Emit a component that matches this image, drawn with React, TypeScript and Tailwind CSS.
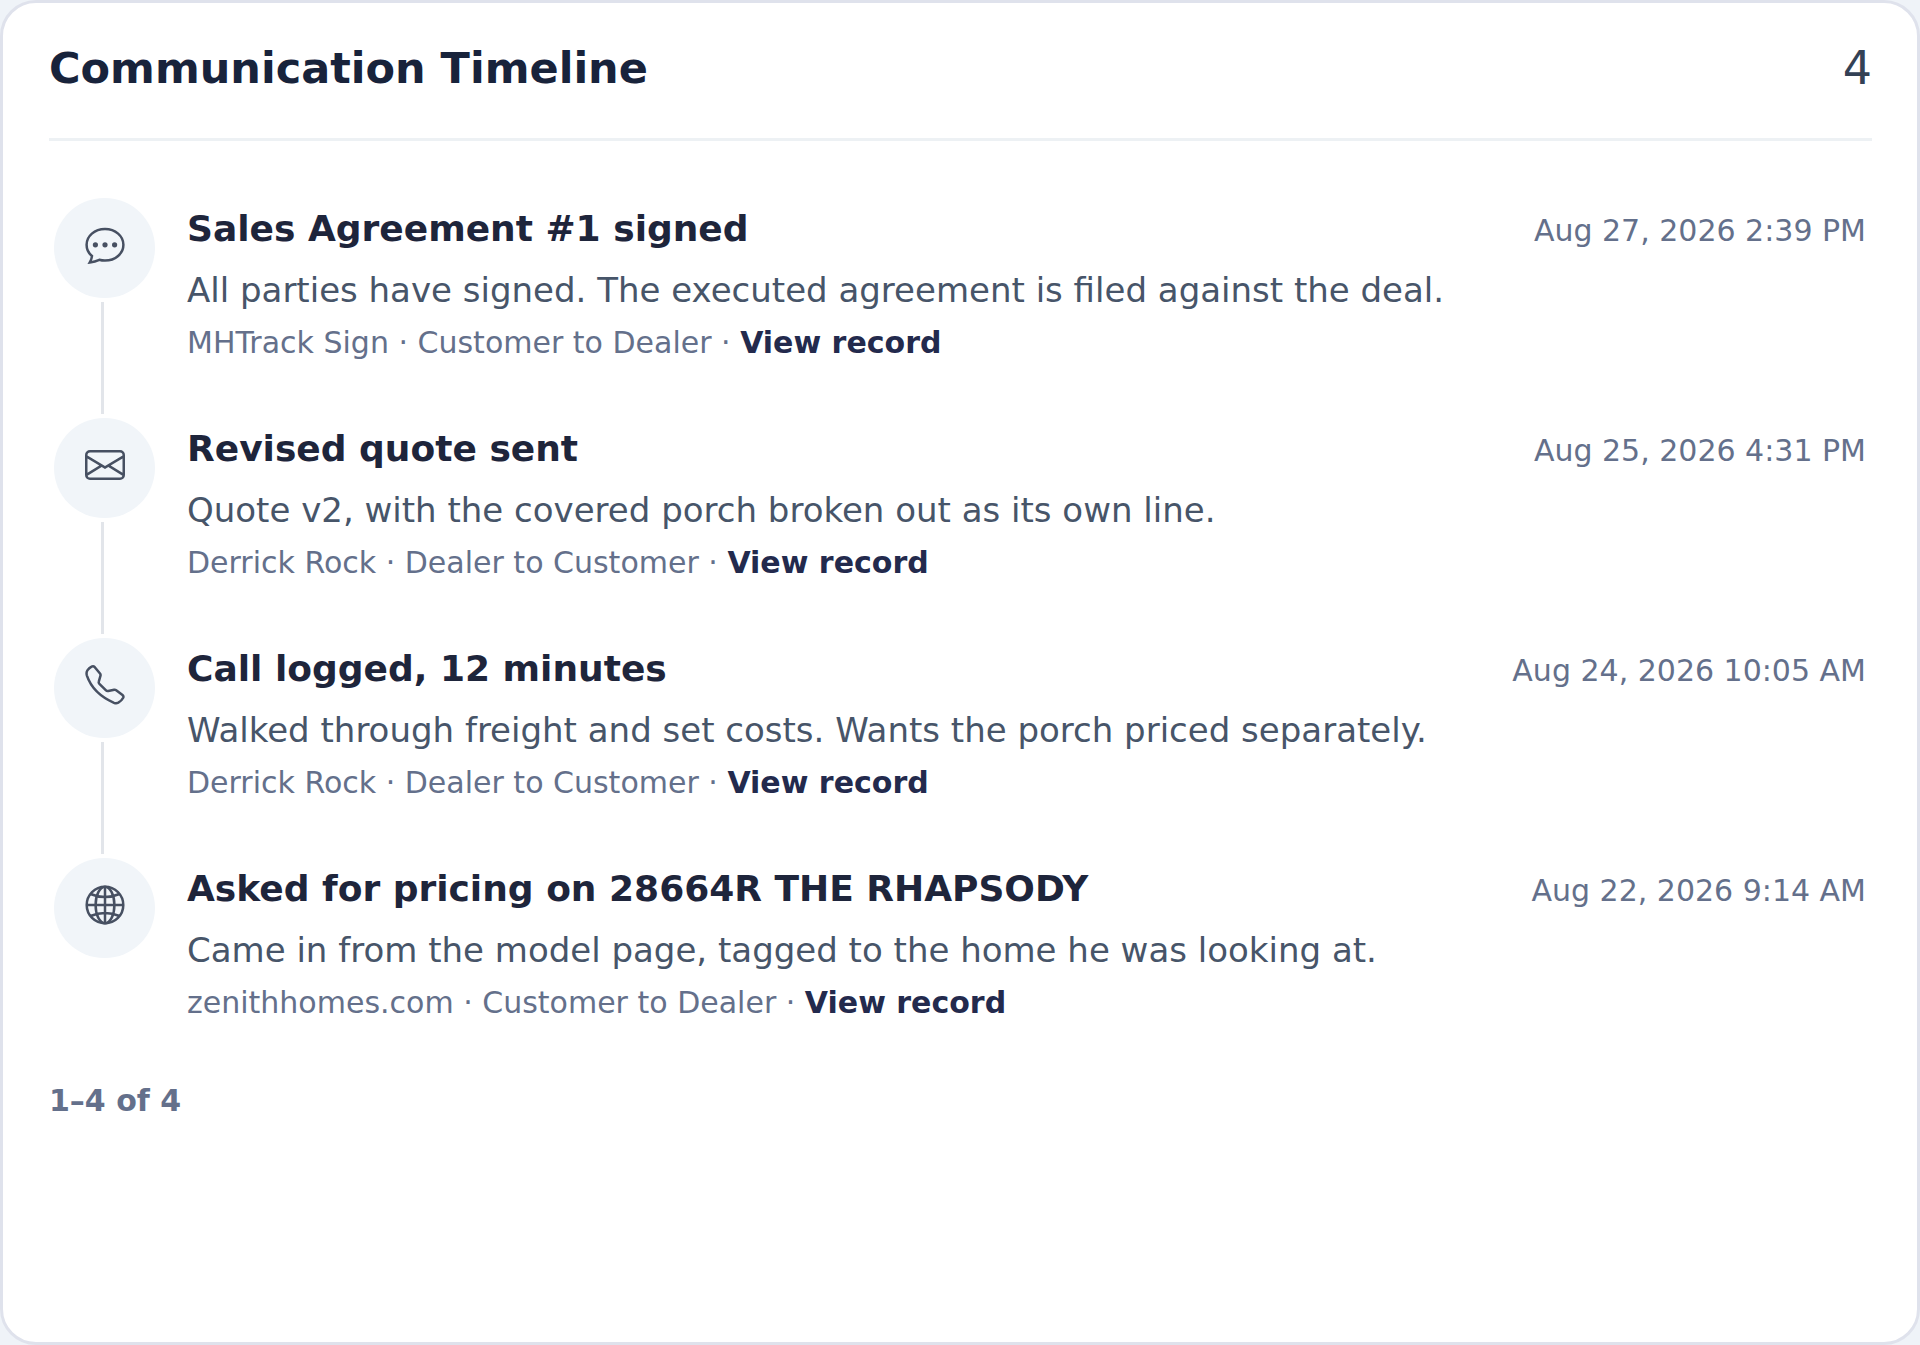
import React from "react";
import { BsEnvelope } from "react-icons/bs";

type IconProps = { className?: string };

const ChatIcon = ({ className }: IconProps) => (
  <svg viewBox="0 0 40 40" fill="none" stroke="currentColor" strokeWidth="2.5" strokeLinejoin="miter" className={className}>
    <path d="M7 31C3.5 28.2 1.6 24.2 1.6 19.8C1.6 11 9.6 4 20 4S38.4 11 38.4 19.8S30.4 35.6 20 35.6C18 35.6 16.2 35.4 14.3 34.8C11.5 36.2 8 37.1 4.8 37.4C6 35.4 6.8 33.2 7 31Z" />
    <g fill="currentColor" stroke="none">
      <circle cx="10.4" cy="19.8" r="2.6" />
      <circle cx="20" cy="19.8" r="2.6" />
      <circle cx="29.6" cy="19.8" r="2.6" />
    </g>
  </svg>
);

const PhoneIcon = ({ className }: IconProps) => (
  <svg viewBox="0 0 40 40" fill="none" stroke="currentColor" strokeWidth="2.5" strokeLinejoin="round" strokeLinecap="round" className={className}>
    <path d="M2.4 5.4Q1 7.6 1.9 10.6Q8 28.5 29 37.8Q31.3 38.7 33.3 37.7Q36.6 35.9 38.2 32.8Q38.9 31.2 37.5 30L31.2 25.2Q30.3 24.5 29.2 24.7L23.2 26Q21.9 26.3 21 25.4L14.4 18.9Q13.4 17.9 13.8 16.6L15.5 10.6Q15.8 9.5 15 8.5L9.8 2.2Q8.3 .7 6.6 1.7Q4 3.1 2.4 5.4Z" />
  </svg>
);

const GlobeIcon = ({ className }: IconProps) => (
  <svg viewBox="0 0 40 40" fill="none" stroke="currentColor" strokeWidth="2.5" className={className}>
    <circle cx="20" cy="20" r="18.3" />
    <ellipse cx="20" cy="20" rx="9.4" ry="18.3" />
    <path d="M20 1.5v37M1.5 20h37M5.5 9Q20 15.2 34.5 9M5.5 31Q20 24.8 34.5 31" />
  </svg>
);

const entries = [
  {
    icon: ChatIcon,
    title: "Sales Agreement #1 signed",
    date: "Aug 27, 2026 2:39 PM",
    text: "All parties have signed. The executed agreement is filed against the deal.",
    source: "MHTrack Sign",
    direction: "Customer to Dealer",
  },
  {
    icon: BsEnvelope,
    title: "Revised quote sent",
    date: "Aug 25, 2026 4:31 PM",
    text: "Quote v2, with the covered porch broken out as its own line.",
    source: "Derrick Rock",
    direction: "Dealer to Customer",
  },
  {
    icon: PhoneIcon,
    title: "Call logged, 12 minutes",
    date: "Aug 24, 2026 10:05 AM",
    text: "Walked through freight and set costs. Wants the porch priced separately.",
    source: "Derrick Rock",
    direction: "Dealer to Customer",
  },
  {
    icon: GlobeIcon,
    title: "Asked for pricing on 28664R THE RHAPSODY",
    date: "Aug 22, 2026 9:14 AM",
    text: "Came in from the model page, tagged to the home he was looking at.",
    source: "zenithhomes.com",
    direction: "Customer to Dealer",
  },
];

type EntryProps = { entry: (typeof entries)[number]; last: boolean };

const TimelineEntry = ({ entry, last }: EntryProps) => {
  const Icon = entry.icon;

  return (
    <li className="flex gap-8">
      <div className="flex w-[101px] flex-col items-center">
        <div className="flex h-[100px] w-[101px] shrink-0 justify-center rounded-full bg-[#f1f5f9] pt-[27px]">
          <Icon className="h-10 w-10 text-[#475062]" />
        </div>
        {!last && <div className="my-1 mr-1 w-[3px] grow bg-[#e2e5ea]" />}
      </div>
      <div className={last ? "grow" : "grow pb-[51px]"}>
        <div className="flex items-baseline justify-between pt-[7px]">
          <h3 className="text-[36px] leading-[48px] font-bold text-[#1e253b]">{entry.title}</h3>
          <time className="text-[30px] leading-[48px] text-[#64708b]">{entry.date}</time>
        </div>
        <p className="mt-2 text-[34px] leading-[54px] text-[#475569]">{entry.text}</p>
        <p className="mt-0.5 text-[30px] leading-[48px] text-[#64708b]">
          {entry.source} · {entry.direction} ·{" "}
          <a href="#" className="font-bold text-[#232a4d]">View record</a>
        </p>
      </div>
    </li>
  );
};

const App = () => {
  return (
    <div className="flex min-h-screen flex-col bg-[#eff3f8] font-['DejaVu_Sans',sans-serif]">
      <section className="grow rounded-[36px] border-[3px] border-[#dfe2ec] bg-white pt-[33px] pr-[45px] pl-[46px]">
        <header className="flex items-center justify-between border-b-[3px] border-[#edf1f4] pb-[38px]">
          <h2 className="text-[43px] leading-[64px] font-bold text-[#18233b]">Communication Timeline</h2>
          <span className="text-[46px] leading-[64px] text-[#334155]">4</span>
        </header>
        <ol className="pt-[57px] pr-1.5 pl-[5px]">
          {entries.map((entry, index) => (
            <TimelineEntry key={entry.title} entry={entry} last={index === entries.length - 1} />
          ))}
        </ol>
        <p className="mt-[50px] text-[30px] leading-[48px] font-bold text-[#64708b]">1–4 of 4</p>
      </section>
    </div>
  );
};

export default App;
